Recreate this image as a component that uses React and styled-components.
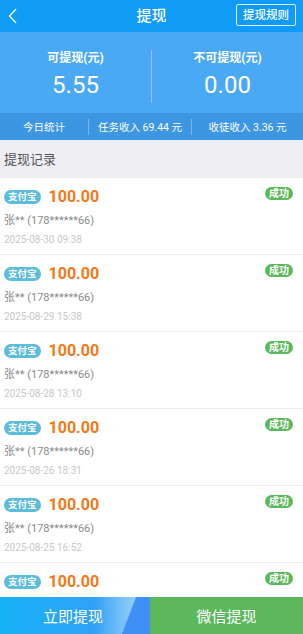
import React from 'react';
import styled, { createGlobalStyle } from 'styled-components';

const GlobalStyle = createGlobalStyle`
  html, body {
    margin: 0;
    padding: 0;
    background: #eeeef3;
  }
  body {
    font-family: Roboto, "Noto Sans CJK SC", "Noto Sans", sans-serif;
  }
`;

const Page = styled.div`
  width: 303px;
  height: 634px;
  overflow: hidden;
  background: #eeeef3;
  display: flex;
  flex-direction: column;
`;

const Header = styled.div`
  flex: none;
  height: 32px;
  background: #0f9bf6;
  display: flex;
  align-items: center;
  justify-content: space-between;
  padding: 0 7px 0 8px;
  position: relative;
`;

const Title = styled.div`
  position: absolute;
  left: 0;
  right: 0;
  text-align: center;
  color: #fff;
  font-size: 15px;
  font-weight: 500;
  line-height: 32px;
  pointer-events: none;
`;

const BackButton = styled.div`
  width: 14px;
  height: 18px;
  display: flex;
  align-items: center;
`;

const RuleButton = styled.div`
  border: 1px solid rgba(255, 255, 255, 0.85);
  border-radius: 2px;
  color: #fff;
  font-size: 11.5px;
  font-weight: 500;
  height: 20px;
  line-height: 20px;
  padding: 0 6px;
  margin-top: -3px;
`;

const Hero = styled.div`
  flex: none;
  height: 81px;
  background: #4aa9f5;
  display: grid;
  grid-template-columns: 1fr 1px 1fr;
  align-items: center;
`;

const HeroCol = styled.div`
  display: flex;
  flex-direction: column;
  align-items: center;
  color: #fff;
  padding-top: 4px;
`;

const HeroLabel = styled.div`
  font-size: 12px;
  font-weight: bold;
  line-height: 16px;
`;

const HeroValue = styled.div`
  font-size: 24px;
  line-height: 30px;
  margin-top: 4px;
`;

const VLine = styled.div`
  width: 1px;
  height: 53px;
  margin-top: 8px;
  background: rgba(255, 255, 255, 0.35);
`;

const Stats = styled.div`
  flex: none;
  height: 27px;
  background: #3d96e2;
  display: grid;
  grid-template-columns: 88px 1px 102px 1px 1fr;
  align-items: center;
  color: #fff;
  font-size: 10.5px;
`;

const StatCell = styled.div`
  text-align: center;
`;

const StatLine = styled.div`
  width: 1px;
  height: 16px;
  background: rgba(255, 255, 255, 0.3);
`;

const SectionTitle = styled.div`
  flex: none;
  height: 38px;
  line-height: 40px;
  padding-left: 4px;
  color: #555;
  font-size: 13px;
`;

const List = styled.div`
  flex: 1;
  min-height: 0;
  overflow: hidden;
  background: #fff;
`;

const Item = styled.div`
  height: 77px;
  border-bottom: 1px solid #ececec;
  padding: 9px 10px 0 4px;
  box-sizing: border-box;
  display: flex;
  flex-direction: column;
`;

const TopRow = styled.div`
  display: flex;
  align-items: center;
  height: 18px;
`;

const PayBadge = styled.span`
  background: #5bbcdc;
  color: #fff;
  font-size: 9.5px;
  font-weight: bold;
  border-radius: 7px;
  height: 14px;
  line-height: 14px;
  padding: 0 4px;
  margin-top: 2px;
`;

const Amount = styled.span`
  color: #f27918;
  font-size: 16px;
  font-weight: bold;
  margin-left: 8px;
`;

const Status = styled.span`
  margin-left: auto;
  background: #5cb85c;
  color: #fff;
  font-size: 10px;
  font-weight: bold;
  border-radius: 7px;
  height: 13px;
  line-height: 13px;
  padding: 0 4px;
  margin-top: -5px;
`;

const Name = styled.div`
  color: #8a8a8a;
  font-size: 11px;
  margin-top: 9px;
  line-height: 14px;
`;

const Time = styled.div`
  color: #c8c8c8;
  font-size: 10px;
  margin-top: 5px;
  line-height: 14px;
`;

const Footer = styled.div`
  flex: none;
  height: 37px;
  display: grid;
  grid-template-columns: 150px 1fr;
`;

const FootButton = styled.div`
  position: relative;
  overflow: hidden;
  display: flex;
  align-items: center;
  justify-content: center;
  color: #fff;
  font-size: 15px;
  background: ${(p) => p.bg};
`;

const Slant = styled.div`
  position: absolute;
  top: 0;
  bottom: 0;
  right: 0;
  width: 28px;
  background: #3e8ff6;
  clip-path: polygon(14px 0, 100% 0, 100% 100%, 0 100%);
`;

const Shine = styled.div`
  position: absolute;
  top: 0;
  bottom: 0;
  right: 12px;
  width: 40px;
  background: linear-gradient(90deg, rgba(255,255,255,0), rgba(255,255,255,0.35));
  clip-path: polygon(0 0, 100% 0, calc(100% - 14px) 100%, 0 100%);
`;

const ButtonText = styled.span`
  position: relative;
  margin-right: ${(p) => p.shift || 0}px;
`;

const records = [
  '2025-08-30 09:38',
  '2025-08-29 15:38',
  '2025-08-28 13:10',
  '2025-08-26 18:31',
  '2025-08-25 16:52',
  '2025-08-24 10:12',
];

function App() {
  return (
    <Page>
      <GlobalStyle />
      <Header>
        <BackButton>
          <svg width="9" height="16" viewBox="0 0 9 16">
            <path d="M8 1 L1.5 8 L8 15" fill="none" stroke="#fff" strokeWidth="1.4" />
          </svg>
        </BackButton>
        <Title>提现</Title>
        <RuleButton>提现规则</RuleButton>
      </Header>
      <Hero>
        <HeroCol>
          <HeroLabel>可提现(元)</HeroLabel>
          <HeroValue>5.55</HeroValue>
        </HeroCol>
        <VLine />
        <HeroCol>
          <HeroLabel>不可提现(元)</HeroLabel>
          <HeroValue>0.00</HeroValue>
        </HeroCol>
      </Hero>
      <Stats>
        <StatCell>今日统计</StatCell>
        <StatLine />
        <StatCell>任务收入 69.44 元</StatCell>
        <StatLine />
        <StatCell>收徒收入 3.36 元</StatCell>
      </Stats>
      <SectionTitle>提现记录</SectionTitle>
      <List>
        {records.map((t) => (
          <Item key={t}>
            <TopRow>
              <PayBadge>支付宝</PayBadge>
              <Amount>100.00</Amount>
              <Status>成功</Status>
            </TopRow>
            <Name>张** (178******66)</Name>
            <Time>{t}</Time>
          </Item>
        ))}
      </List>
      <Footer>
        <FootButton bg="linear-gradient(90deg, #17b2f6 0%, #2fa2f6 60%, #6fbcf8 100%)">
          <Shine />
          <Slant />
          <ButtonText shift={4}>立即提现</ButtonText>
        </FootButton>
        <FootButton bg="#5cb85c">微信提现</FootButton>
      </Footer>
    </Page>
  );
}

export default App;
